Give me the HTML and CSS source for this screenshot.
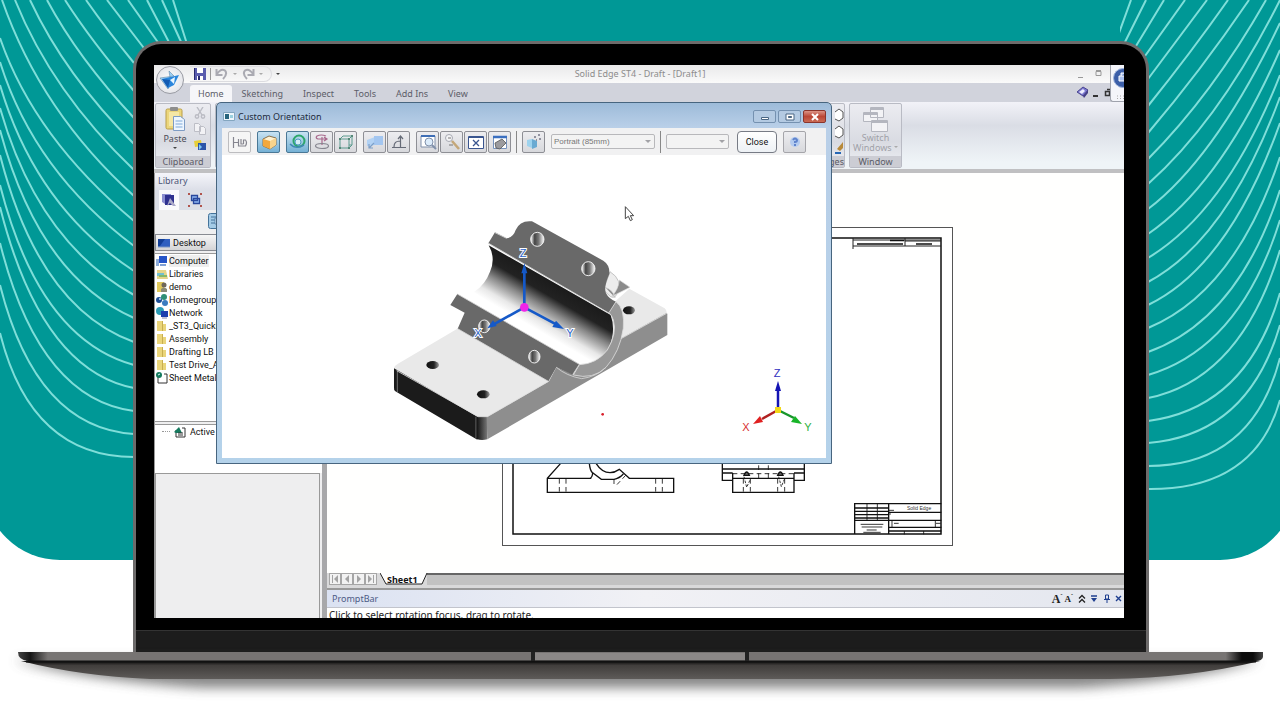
FILE: index.html
```html
<!DOCTYPE html>
<html lang="en">
<head>
<meta charset="utf-8">
<title>Solid Edge ST4 - Draft</title>
<link rel="stylesheet" href="styles.css">
</head>
<body>
<div class="backdrop">
  <svg class="waves waves-left" width="200" height="500" viewBox="0 0 200 500" aria-hidden="true">
    <path d="M173 0L187 44M162 0L182 44M147 0L172 48M128 0L162 48M107 0L150 56M86 0Q107 30 134 63M65 0Q92 42 134 91M47 0Q78 58 134 118M30 0Q65 75 134 144M15 0Q52 92 134 170M2 0Q41 112 134 196M0 38Q34 137 134 221M0 62Q34 171 134 246M0 85Q36 207 134 271M0 108Q38 242 134 295M0 130Q39 276 134 318M0 155Q39 308 134 342M0 185Q39 339 134 365M0 207Q41 370 134 388M0 243Q39 399 134 411M0 285Q36 428 134 434M0 333Q31 457 134 457"/>
  </svg>
  <svg class="waves waves-right" width="160" height="500" viewBox="1120 0 160 500" aria-hidden="true">
    <path d="M1131 0L1115 44M1146 0L1124 44M1164 0L1136 46M1185 0L1145 56M1207 0L1148 79M1228 0Q1190 54 1148 106M1249 0Q1200 72 1148 133M1266 0Q1212 95 1148 159M1280 0Q1220 120 1148 184M1280 23Q1216 157 1148 209M1280 50Q1221 184 1148 234M1280 75Q1227 210 1148 258M1280 97Q1227 240 1148 282M1280 123Q1229 266 1148 305M1280 157Q1235 292 1148 328M1280 190Q1238 320 1148 352M1280 220Q1240 348 1148 375M1280 250Q1241 379 1148 398M1280 293Q1247 408 1148 421M1280 325Q1248 435 1148 443M1280 358Q1252 466 1148 466M1280 400Q1255 490 1148 489"/>
  </svg>
</div>

<div class="laptop">
  <div class="lid">
    <div class="screen">
      <header class="titlebar">
        <div class="quick">
          <button class="plain" aria-label="Save"><svg width="12" height="12" viewBox="0 0 12 12"><path fill="#5a5cae" d="M0 0h12v12H0z"/><path fill="#fff" d="M3 0h6v5H3zM3 8h6v4H3z"/><path fill="#26286e" d="M4 8h2v4H4zM0 0h1v12H0z"/></svg></button>
          <span class="vline"></span>
          <button class="plain" aria-label="Undo"><svg width="14" height="12" viewBox="0 0 14 12"><path d="M1.500 1v6h6M2 6Q6 0 10 2.500Q13 6 8 11" fill="none" stroke="#aaaab2" stroke-width="2"/></svg></button>
          <i class="tri"></i>
          <button class="plain" aria-label="Redo"><svg width="14" height="12" viewBox="0 0 14 12"><path d="M12.500 1v6h-6M12 6Q8 0 4 2.500Q1 6 6 11" fill="none" stroke="#aaaab2" stroke-width="2"/></svg></button>
          <i class="tri"></i>
        </div>
        <i class="tri tri-dark"></i>
        <h1>Solid Edge ST4 - Draft - [Draft1]</h1>
        <svg class="wincontrols" width="24" height="10" viewBox="0 0 24 10" fill="none" stroke="#999"><path d="M0 8.500h5M18 2.500h5v4h-5zM18 1.500h5" stroke-width="1"/></svg>
      </header>

      <nav class="tabs">
        <a class="tab tab-on" href="#home">Home</a>
        <a class="tab" href="#sketching">Sketching</a>
        <a class="tab" href="#inspect">Inspect</a>
        <a class="tab" href="#tools">Tools</a>
        <a class="tab" href="#addins">Add Ins</a>
        <a class="tab" href="#view">View</a>
        <svg class="dochelp" width="36" height="14" viewBox="0 0 36 14"><path d="M1 7l6-5 5 3-5 6z" fill="#7b78d0" stroke="#4b4690"/><path d="M3 7l4-3 2 2-3 3z" fill="#eef"/><path d="M7 11l5-6v3l-4 5z" fill="#453f87"/><path d="M17 11h5" stroke="#333" stroke-width="2"/><path d="M29.500 6.500h4v4h-4zM31 4.500h5v4" fill="none" stroke="#333" stroke-width="1.500"/></svg>
      </nav>

      <button class="appbutton" aria-label="Application menu"><svg width="24" height="24" viewBox="0 0 24 24"><path d="M2 10l14-2-5-5 2 12-3 6z" fill="#9fd2f6" stroke="#6188a8" stroke-width=".6"/><path d="M4 11l17-4-5 10-6 3z" fill="#2b86dc"/><path d="M4 11l8 1-2 8z" fill="#125bb3"/><path d="M12 12l5-3-1 7z" fill="#e6f5ff"/></svg></button>

      <div class="ribbon">
        <section class="group clipboard">
          <div class="groupbody">
            <button class="big"><svg width="20" height="24" viewBox="0 0 20 24"><rect x="1" y="2" width="16" height="20" rx="1.500" fill="#ecd67c" stroke="#b99e49"/><rect x="5" y="0" width="8" height="4" rx="1" fill="#8d8d8d"/><path d="M4 5h10v14H4z" fill="#f5e7a6"/><path d="M8.500 9.500h7l4 3v11h-11z" fill="#eef6ff" stroke="#7e9cc4"/><path d="M10.500 14h7M10.500 17h7M10.500 20h7" stroke="#7fa9d8"/></svg><span>Paste</span><i class="tri tri-dark"></i></button>
            <div class="stack">
              <svg width="12" height="12" viewBox="0 0 12 12" fill="none" stroke="#bbbcc4" stroke-width="1.400"><path d="M3 0l5 8M9 0L4 8"/><circle cx="3" cy="9.500" r="1.700"/><circle cx="9" cy="9.500" r="1.700"/></svg>
              <svg width="12" height="12" viewBox="0 0 12 12" fill="#f2f2f5" stroke="#bdbec6"><path d="M.5.5h4l2 2v6h-6zM5.500 3.500h4l2 2v6h-6z"/></svg>
              <svg width="12" height="12" viewBox="0 0 12 12"><path d="M0 2l7-1 1 6-7 1z" fill="#e6cf3a"/><path d="M4 4h8v7H4z" fill="#2c55a8"/><path d="M5 5l3 3-3 3z" fill="#7cc7f4"/></svg>
            </div>
          </div>
          <h2>Clipboard</h2>
        </section>
        <section class="group images">
          <div class="groupbody"><svg width="9" height="48" viewBox="0 0 9 48"><path d="M0 5l4-3 4 3v6l-4 3-4-2M0 22l4-3 4 3v6l-4 3-4-2" fill="#fff" stroke="#555"/><path d="M2 42l6-7v6l-3 3z" fill="#b88a3a"/><path d="M0 46h6" stroke="#2667b5" stroke-width="2"/></svg></div>
          <h2>Images</h2>
        </section>
        <section class="group window">
          <div class="groupbody">
            <button class="big dim"><svg width="26" height="25" viewBox="0 0 26 25" fill="#f3f3f6" stroke="#b4b6bf"><path d="M7.500.5h13v10h-13zM.5 5.500h14v9H.5zM8.500 13.500h16v11h-16z"/><path d="M8 2h12M1 7h13M9 15h15" stroke-width="2"/></svg><span>Switch<br>Windows <i class="tri"></i></span></button>
          </div>
          <h2>Window</h2>
        </section>
      </div>

      <div class="gadget"><svg width="14" height="36" viewBox="0 0 14 36"><circle cx="12" cy="13" r="9.500" fill="#3b5ea8" stroke="#9fb4dc"/><path d="M8 11h7v5H8zM10 11V8h5" fill="#a9c0ee" stroke="#fff"/><path d="M6 31h8M6 33.500h8" stroke="#aaa" stroke-dasharray="1 2"/></svg></div>

      <div class="work">
        <aside class="library">
          <h2 class="panehead">Library</h2>
          <div class="panetabs">
            <button class="panetab on" aria-label="Library"><svg width="16" height="14" viewBox="0 0 16 14"><path d="M1 1h9v11l-6-1-3-2z" fill="#8b8ed0"/><path d="M4 2h9v10H4z" fill="#2f318f"/><path d="M9 5l6 8h-3l-3-3-3 3z" fill="#aaa9c8"/></svg></button>
            <button class="panetab" aria-label="Blocks"><svg width="14" height="14" viewBox="0 0 14 14"><path d="M3.500 2.500h6v5h-6zM5.500 5.500h6v5h-6z" fill="#8fb7f2" stroke="#28479c" stroke-width="1.300"/><path d="M0 0h2v2H0zM12 0h2v2h-2zM0 12h2v2H0zM12 12h2v2h-2z" fill="#b0544c"/></svg></button>
          </div>
          <div class="panetools"><svg width="20" height="16" viewBox="0 0 20 16"><rect x=".5" y=".5" width="19" height="15" rx="2" fill="#a4cbe6" stroke="#44739a"/><path d="M3 4h5M3 7h9M3 10h5" stroke="#44739a"/><path d="M7 5h6v6H7z" fill="#e9f5ff" stroke="#5c88b0"/></svg></div>
          <button class="place"><svg width="12" height="10" viewBox="0 0 12 10"><path d="M0 1h12v8H0z" fill="#2f5fc0"/><path d="M0 1h7L2 8H0z" fill="#123e96"/><path d="M0 9h12" stroke="#7895c5"/></svg>Desktop</button>
          <ul class="files">
            <li><svg class="ico" viewBox="0 0 12 12"><path d="M3 1h8v7H3z" fill="#2554c8"/><path d="M0 4h3v7H0z" fill="#8dabd8"/><path d="M4 10h6" stroke="#7fa0d5" stroke-width="2"/></svg><span class="current">Computer</span></li>
            <li><svg class="ico" viewBox="0 0 12 12"><path d="M1 2h9l2 9H1z" fill="#e6d487"/><path d="M1 5h7v3H1z" fill="#73bfcf"/><path d="M3 7h8v2H3z" fill="#84b86a"/></svg>Libraries</li>
            <li><svg class="ico" viewBox="0 0 12 12"><path d="M1 1h7v10H1z" fill="#dfc85c"/><circle cx="8" cy="4" r="2.500" fill="#6e675b"/><path d="M5 11V8q3-3 6 0v3z" fill="#8c8b76"/></svg>demo</li>
            <li><svg class="ico" viewBox="0 0 12 12"><circle cx="3" cy="6" r="3" fill="#1c4e96"/><circle cx="8" cy="3" r="3" fill="#2f8f74"/><circle cx="9" cy="9" r="3" fill="#3b7cc0"/><circle cx="4" cy="5" r="1" fill="#bfe2ff"/></svg>Homegroup</li>
            <li><svg class="ico" viewBox="0 0 12 12"><circle cx="4" cy="4" r="4" fill="#2a9bb5"/><path d="M5 4h7v6H5z" fill="#1d3fae"/><path d="M6 11h5" stroke="#88a"/></svg>Network</li>
            <li><svg class="ico" viewBox="0 0 12 12"><path d="M1 1h5v3h4v7H1z" fill="#ead57a"/><path d="M6 1h1v10H6z" fill="#c8ae50"/></svg>_ST3_QuickLearn</li>
            <li><svg class="ico" viewBox="0 0 12 12"><path d="M1 1h5v3h4v7H1z" fill="#ead57a"/><path d="M6 1h1v10H6z" fill="#c8ae50"/></svg>Assembly</li>
            <li><svg class="ico" viewBox="0 0 12 12"><path d="M1 1h5v3h4v7H1z" fill="#ead57a"/><path d="M6 1h1v10H6z" fill="#c8ae50"/></svg>Drafting LB</li>
            <li><svg class="ico" viewBox="0 0 12 12"><path d="M1 1h5v3h4v7H1z" fill="#ead57a"/><path d="M6 1h1v10H6z" fill="#c8ae50"/></svg>Test Drive_Assy</li>
            <li><svg class="ico" viewBox="0 0 12 12"><path d="M2 5v6h9V2H8" fill="#fff" stroke="#333"/><circle cx="3" cy="3" r="3" fill="#157a5e"/><path d="M2 3l2-1" stroke="#dff"/></svg>Sheet Metal1</li>
          </ul>
          <div class="active"><span class="leader"></span><svg class="ico" viewBox="0 0 12 12"><path d="M2 4v7h9V2H8" fill="#fff" stroke="#333"/><path d="M0 6l5-5 3 6H2z" fill="#157a5e"/><path d="M4 7h5M4 9h5" stroke="#333"/></svg>Active</div>
          <div class="preview"></div>
        </aside>

        <main class="main">
          <div class="canvas">
            <svg width="797" height="400" viewBox="327 173 797 400" role="img" aria-label="Draft sheet">
              <rect x="502.500" y="227.500" width="450" height="318" fill="#fff" stroke="#555"/>
              <path d="M513 238H941V534H513z" fill="none" stroke="#111" stroke-width="1.500"/>
              <path d="M853 238V249M853 240H941M853 246H941M905 238V246M905 241h36" stroke="#222" fill="none"/><path d="M890 240.500h14M857 244h46M916 244h16" stroke="#111" stroke-width="1.500"/>
              <g transform="translate(480 440) scale(.33333)" fill="none" stroke="#111" stroke-width="4">
                <path d="M202 115H334M446 115H581V157H202V115L242 70M328 70Q330 92 338 99Q337 112 330 115M338 98L364 118H402Q418 115 430 102M348 70Q366 98 390 98Q404 98 418 88L448 115"/>
                <path d="M238 117v40M258 117v40M527 117v40M547 117v40M437 106l-30 32M402 118v14" stroke-width="2.500" stroke-dasharray="14 10"/>
                <path d="M727 70V121H758M973 70V121H942M727 87H973M727 99H758M942 99H973M758 99V157H942V99M758 115H942"/>
                <path d="M758 101H942M836 76v40M865 76v40M790 117v40M811 117v40M893 117v40M914 117v40" stroke-width="2.500" stroke-dasharray="14 10"/>
                <path d="M792 106q8-20 16 0zM893 106q8-20 16 0z" fill="#666"/><path d="M792 110l8 32 10-22M896 110l8 30 9-22" stroke-width="2.500" stroke-dasharray="8 4"/>
                <path d="M1124 282V191H1384M1226 191V282M1124 204H1226M1124 214H1226M1124 224H1226M1124 234H1226M1124 241H1384M1226 217H1384M1226 262H1384M1226 273H1384"/>
                <path d="M1161 191v50M1192 191v50M1236 241v20M1366 241v20M1273 273v10M1331 273v10M1242 250h14M1368 250h14M1230 217v8M1226 211h16M1142 253h68M1145 261h62M1160 270h30M1150 277h52" stroke-width="2.500"/>
              </g>
              <text class="sheetlabel" x="907" y="510">Solid Edge</text>
            </svg>
          </div>
          <div class="sheets">
            <button class="nav" aria-label="First"><svg width="8" height="8" viewBox="0 0 8 8"><path d="M1 0h1v8H1zM7 0v8L3 4z"/></svg></button>
            <button class="nav" aria-label="Previous"><svg width="8" height="8" viewBox="0 0 8 8"><path d="M6 0v8L2 4z"/></svg></button>
            <button class="nav" aria-label="Next"><svg width="8" height="8" viewBox="0 0 8 8"><path d="M2 0v8l4-4z"/></svg></button>
            <button class="nav" aria-label="Last"><svg width="8" height="8" viewBox="0 0 8 8"><path d="M6 0h1v8H6zM1 0v8l4-4z"/></svg></button>
            <div class="sheettab">
              <svg width="48" height="12" viewBox="0 0 48 12" aria-hidden="true"><path d="M0 0L6 11H42L47 0" fill="#fff" stroke="#222"/></svg>
              <button>Sheet1</button>
            </div>
            <div class="sheetrail"></div>
          </div>
          <div class="prompthead">
            <h2>PromptBar</h2>
            <span class="fontbig">A<sup>ˆ</sup></span><span class="fontsmall">A<sup>ˇ</sup></span>
            <svg width="46" height="10" viewBox="0 0 46 10" fill="none" stroke="#1f3f8f"><path d="M1 4.500l3-3 3 3M1 8.500l3-3 3 3" stroke="#222" stroke-width="1.300"/><path d="M13 2h6" stroke-width="1.500"/><path d="M13 4h6l-3 4z" fill="#1f3f8f" stroke="none"/><path d="M27.500 1h3v4h-3zM26 5.500h6M29 6v3"/><path d="M38 2l5 5M43 2l-5 5" stroke-width="1.400"/></svg>
          </div>
          <p class="prompt">Click to select rotation focus, drag to rotate.</p>
        </main>
      </div>

      <section class="dialog" role="dialog" aria-label="Custom Orientation">
        <header class="dlghead">
          <svg width="12" height="9" viewBox="0 0 12 9"><path d="M.5.5h11v8H.5z" fill="#eef6fc" stroke="#84a6c0"/><path d="M2 2h4v5H2z" fill="#27647d"/><path d="M7 3h3v3H7z" fill="#9ad0df"/></svg>
          <h2>Custom Orientation</h2>
          <button class="cap" aria-label="Minimize"><svg width="10" height="8" viewBox="0 0 10 8"><path d="M1.500 4.500h7v2h-7z" fill="#fff" stroke="#4a6684"/></svg></button>
          <button class="cap" aria-label="Maximize"><svg width="10" height="8" viewBox="0 0 10 8"><path d="M1 1h8v6H1z" fill="#fff" stroke="#4a6684"/><path d="M3.500 3.500h3v1h-3z" stroke="#4a6684"/></svg></button>
          <button class="cap cap-close" aria-label="Close window"><svg width="10" height="8" viewBox="0 0 10 8"><path d="M2 1l6 6M8 1L2 7" stroke="#fff" stroke-width="2"/></svg></button>
        </header>
        <div class="toolbar">
          <div class="tools"><button class="tool pale" aria-label="Named views"><svg viewBox="0 0 18 18" fill="none" stroke="#85858f" stroke-width="1.200"><path d="M2.500 4v11M3 9.500h4M7.500 6v7h7q2-3.500 0-6h-2v4M10 6v5h2.500"/></svg></button></div>
          <div class="tools"><button class="tool on" aria-label="Common views"><svg viewBox="0 0 18 18"><path d="M3 6l6-3 7 2v7l-6 4-7-3z" fill="#fff1cf" stroke="#8a704a"/><path d="M3 6l7 2v8l-7-3z" fill="#f2a83e"/><path d="M10 8l6-3v7l-6 4z" fill="#f8d38b"/></svg></button></div>
          <div class="tools">
            <button class="tool on" aria-label="Rotate"><svg viewBox="0 0 18 18" fill="none"><circle cx="10" cy="8" r="5.500" stroke="#2ca66b" stroke-width="2"/><circle cx="9" cy="9" r="3" fill="#d5edf5" stroke="#4b9ac2"/><path d="M1 11q6 6 14 1" stroke="#3f88b4" stroke-width="1.500"/></svg></button>
            <button class="tool" aria-label="Spin about"><svg viewBox="0 0 18 18" fill="none" stroke="#a8688c" stroke-width="1.200"><path d="M13 3q-5-2-9 0-2 2 1 3h8M11 4l3 2-3 2M9 4v8"/><ellipse cx="9" cy="13" rx="6.500" ry="2.500" stroke="#85858f"/></svg></button>
            <button class="tool" aria-label="Fit box"><svg viewBox="0 0 18 18" fill="none" stroke="#5a9a8e"><path d="M3 6h9v9H3zM6 3h9v9h-3M3 6l3-3M12 6l3-3M12 15l3-3"/><path d="M2 5h2v2H2zM11 5h2v2h-2zM2 14h2v2H2zM11 14h2v2h-2zM14 2h2v2h-2z" fill="#587" stroke="none"/></svg></button>
          </div>
          <div class="tools">
            <button class="tool" aria-label="Look at face"><svg viewBox="0 0 18 18"><path d="M1 7l8-3v8l-8 1z" fill="#b2d2f4"/><path d="M8 3h9v9H8z" fill="#a3c6f0"/><path d="M3 15l5-5M3 11v4h4" stroke="#7d9fc8" fill="none" stroke-width="1.200"/></svg></button>
            <button class="tool" aria-label="Align edge"><svg viewBox="0 0 18 18" fill="none" stroke="#666b77" stroke-width="1.200"><path d="M2 14.500h14M10.500 4v10M8 6l2.500-3L13 6M4 14q0-6 6-6"/></svg></button>
          </div>
          <div class="tools">
            <button class="tool" aria-label="Zoom area"><svg viewBox="0 0 18 18" fill="#fff" stroke="#8090aa"><path d="M2 3h14v11H2z"/><path d="M2 3h14" stroke="#3f6eb5" stroke-width="2"/><circle cx="10" cy="9" r="4" fill="#dcecfb"/><path d="M13 12l4 4" stroke-width="2"/></svg></button>
            <button class="tool" aria-label="Zoom"><svg viewBox="0 0 18 18" fill="none"><circle cx="6" cy="5" r="3.500" stroke="#a6a9b2" fill="#f4f4f6"/><path d="M5 5h3M6 12h4" stroke="#777"/><path d="M9 8l7 8" stroke="#c4a779" stroke-width="2.500"/></svg></button>
            <button class="tool" aria-label="Fit"><svg viewBox="0 0 18 18" fill="#fff" stroke="#39558f"><path d="M1.500 3.500h15v12h-15z"/><path d="M2 4h14" stroke-width="2"/><path d="M6 7l6 6M12 7l-6 6" stroke-width="1.300"/></svg></button>
            <button class="tool" aria-label="Pan"><svg viewBox="0 0 18 18"><path d="M2.500 3.500h13v12h-13z" fill="#fff" stroke="#7692bd"/><path d="M2 4h14" stroke="#3b6fc0" stroke-width="2.500"/><path d="M4 10l7-4 4 4-6 6-4-1z" fill="#9b9b9f" stroke="#555" stroke-width=".8"/></svg></button>
          </div>
          <span class="rule"></span>
          <div class="tools"><button class="tool" aria-label="Perspective"><svg viewBox="0 0 18 18"><path d="M2 7l5-1v9l-5-2z" fill="#9ed3ee"/><path d="M7 6l5 2v6l-5 2z" fill="#6aaad2"/><path d="M9 4h2M13 2h2M14 6h2M11 7h1" stroke="#778" stroke-width="1.500"/></svg></button></div>
          <label class="combo combo-lens"><select aria-label="Lens"><option>Portrait (85mm)</option></select></label>
          <span class="rule"></span>
          <label class="combo combo-angle"><select aria-label="Angle"><option></option></select></label>
          <button class="closebtn">Close</button>
          <button class="tool help" aria-label="Help"><svg viewBox="0 0 18 18"><circle cx="9" cy="9" r="5" fill="#b4cbef"/><path d="M7 7q2-3 4 0q0 2-2 2v1" fill="none" stroke="#5f83cc" stroke-width="2"/><path d="M8 12h2" stroke="#5f83cc" stroke-width="2"/></svg></button>
        </div>
        <div class="viewport">
          <svg width="604" height="303" viewBox="222 155 604 303" role="img" aria-label="Bearing bracket">
            <defs>
              <linearGradient id="bore" gradientUnits="userSpaceOnUse" x1="555" y1="215" x2="450" y2="396">
                <stop offset="0" stop-color="#161616"/><stop offset=".34" stop-color="#222"/><stop offset=".52" stop-color="#888"/><stop offset=".72" stop-color="#e8e8e8"/><stop offset=".85" stop-color="#fff"/>
              </linearGradient>
              <linearGradient id="hole" x1="0" x2="1"><stop offset="0" stop-color="#fff"/><stop offset=".3" stop-color="#444"/><stop offset=".6" stop-color="#777"/><stop offset="1" stop-color="#fff"/></linearGradient>
              <linearGradient id="drill" x1="0" x2="1"><stop offset="0" stop-color="#111"/><stop offset=".6" stop-color="#222"/><stop offset="1" stop-color="#999"/></linearGradient>
              <linearGradient id="corner" x1="0" x2="1"><stop offset="0" stop-color="#111"/><stop offset="1" stop-color="#777"/></linearGradient>
            </defs>
            <g transform="translate(370 200) scale(.33333)">
              <path d="M72 505Q72 498 84 491L262 386L540 545L740 300L778 266L884 325Q892 332 890 342L640 520L352 652H322L80 516z" fill="#e9e9e9"/>
              <path d="M72 505L322 650V719L76 574Q71 570 72 562z" fill="#1b1b1b"/>
              <path d="M82 510V577M318 650V716" stroke="#999" stroke-width="2"/>
              <path d="M320 650H352V718Q334 722 320 717z" fill="url(#corner)"/>
              <path d="M350 652L535 545L559 502L605 521Q680 545 735 425L888 340Q893 338 892 345V405L352 718z" fill="#8e8e8e"/>
              <path d="M80 512L325 650H352L536 544L557 503M735 426L890 340" fill="none" stroke="#e0e0e0" stroke-width="2.500"/>
              <path d="M720 215Q760 240 742 280Q735 297 722 290L700 270z" fill="#ededed" stroke="#aaa" stroke-width="2"/>
              <path d="M748 240L780 262L724 290Q745 270 748 240zM706 262Q730 270 736 294" fill="#8b8b8b" stroke="#ddd" stroke-width="2"/>
              <path d="M356 136Q378 175 360 215Q345 255 312 276L630 494Q690 490 718 440Q738 390 722 345z" fill="url(#bore)"/>
              <path d="M355 130L375 97L410 115Q430 112 437 90Q450 60 486 64L700 182Q720 195 718 222Q700 262 708 280Q716 296 738 305L718 340z" fill="#696969"/>
              <path d="M356 130L718 340M375 98L410 115" stroke="#d8d8d8" stroke-width="2.500" fill="none"/>
              <path d="M738 305Q765 325 760 385Q750 455 708 502Q670 540 610 525L628 494Q680 492 712 450Q742 400 730 360Q725 345 717 338z" fill="#989898" stroke="#ddd" stroke-width="2.500"/>
              <path d="M241 315L262 282L628 493L608 524L559 502L535 544L263 386L284 338z" fill="#696969"/>
              <path d="M262 282L628 493L608 524M559 502Q590 528 635 536Q680 530 708 502M263 386L535 544" fill="none" stroke="#d5d5d5" stroke-width="2.500"/>
              <g fill="url(#hole)" stroke="#eee" stroke-width="3"><ellipse cx="502" cy="118" rx="20" ry="21"/><ellipse cx="655" cy="206" rx="20" ry="21"/><ellipse cx="343" cy="379" rx="17" ry="19"/><ellipse cx="493" cy="470" rx="17" ry="19"/></g>
              <g fill="url(#drill)"><ellipse cx="188" cy="495" rx="19" ry="12"/><ellipse cx="340" cy="583" rx="19" ry="12"/><ellipse cx="777" cy="331" rx="18" ry="12"/></g>
              <path d="M463 322V215M463 322L370 374M463 322L560 374" stroke="#1559c8" stroke-width="8"/>
              <path d="M463 190l9 30h-18zM352 385l17-24 11 17zM582 387l-35-6 11-19z" fill="#1559c8"/>
              <circle cx="463" cy="322" r="13" fill="#f024e8"/>
              <circle cx="698" cy="643" r="4" fill="#d8202c"/>
              <path d="M766 20v36l9-7 6 13 6-3-6-12h10z" fill="#fff" stroke="#444" stroke-width="3"/>
            </g>
            <g class="axis halo"><text x="523" y="257">Z</text><text x="478" y="337">X</text><text x="570" y="337">Y</text></g>
            <g stroke-width="2.500"><path d="M778 409V390" stroke="#1414b4"/><path d="M778 381l3 10h-6z" fill="#1414b4"/><path d="M778 410l-16 9" stroke="#b02020"/><path d="M753 424l7-8 3 6z" fill="#e02020"/><path d="M778 410l16 8" stroke="#18962a"/><path d="M802 424l-11-2 4-6z" fill="#18b428"/></g>
            <path d="M775 407h6v6h-6z" fill="#f2d818"/>
            <g class="axis"><text x="777" y="377" fill="#3030c0">Z</text><text x="746" y="431" fill="#d83030">X</text><text x="808" y="431" fill="#30b040">Y</text></g>
          </svg>
        </div>
      </section>
    </div>
    <div class="chin"></div>
  </div>
  <svg class="base" viewBox="0 0 1280 68" preserveAspectRatio="none" aria-hidden="true">
    <defs>
      <linearGradient id="deck" x1="0" x2="1"><stop offset="0" stop-color="#444"/><stop offset=".01" stop-color="#161616"/><stop offset=".024" stop-color="#777473"/><stop offset=".97" stop-color="#777473"/><stop offset=".983" stop-color="#0a0a0a"/><stop offset=".992" stop-color="#0a0a0a"/><stop offset="1" stop-color="#444"/></linearGradient>
      <linearGradient id="belly" x1="0" x2="0" y1="0" y2="1"><stop offset="0" stop-color="#0b0b0b"/><stop offset=".25" stop-color="#413e3c"/><stop offset="1" stop-color="#5e5b59"/></linearGradient>
      <filter id="soft" x="-5%" y="-50%" width="110%" height="220%"><feGaussianBlur stdDeviation="6"/></filter>
    </defs>
    <path d="M14 8H1260Q1200 28 1080 36H200Q80 28 14 8z" fill="#555" opacity=".7" filter="url(#soft)"/>
    <path d="M21 9H1260Q1190 26 1110 27H150Q80 24 21 9z" fill="url(#belly)"/>
    <path d="M18 0H1263V5Q1262 9 1256 9H28Q18 8 18 0z" fill="url(#deck)"/>
    <path d="M26 9.500H1256" stroke="#111" stroke-width="2"/>
    <path d="M533 1H747V8H533z" fill="#8b8887"/><path d="M533 0v9M747 0v9" stroke="#222" stroke-width="4"/>
  </svg>
</div>
</body>
</html>
```
FILE: styles.css
```css
* { box-sizing: border-box; }
html, body { margin: 0; height: 100%; }
body { position: relative; overflow: hidden; background: #fff; color: #222; font-family: "Noto Sans", "Open Sans", sans-serif; font-size: 9px; line-height: 12px; }
button, select { font: inherit; color: inherit; margin: 0; padding: 0; border: 0; background: none; }
h1, h2, p, ul { margin: 0; padding: 0; font-size: 9px; font-weight: 400; list-style: none; }
svg { display: block; flex: none; }

/* Backdrop */
.backdrop { position: absolute; top: 0; left: -16px; right: -16px; height: 560px; background: #009896; border-radius: 0 0 76px 76px; overflow: hidden; }
.waves { position: absolute; top: 0; fill: none; stroke: #7fded9; stroke-width: 2; }
.waves-left { left: 16px; }
.waves-right { right: 16px; }

/* Laptop */
.laptop { position: relative; display: flex; flex-direction: column; height: 100%; padding-top: 41px; }
.lid { flex: 1; min-height: 0; display: flex; flex-direction: column; margin: 0 131px 0 133px; padding-top: 21px; background: #000; border: 3px solid #6d6b6b; border-bottom: 0; border-radius: 28px 28px 0 0; }
.chin { height: 22px; margin-top: 12px; background: #1c1c1c; border-top: 1px solid #333; }
.base { width: 100%; height: 68px; overflow: visible; }

/* Application window */
.screen { position: relative; flex: 1; min-height: 0; display: flex; flex-direction: column; margin: 0 22px 0 18px; overflow: hidden; background: #d0d2d9; }
.titlebar { flex: none; display: flex; align-items: center; height: 18px; padding: 0 22px 0 36px; background: linear-gradient(#e9e9ea, #fafafa); }
.quick { display: flex; align-items: center; gap: 4px; height: 16px; padding: 0 8px 0 4px; border: 1px solid #dcdce0; border-left: 0; border-radius: 0 8px 8px 0; }
.titlebar > .tri { margin-left: 4px; }
.titlebar h1 { flex: 1; margin-right: 78px; text-align: center; color: #8c8c8c; }
.vline { width: 1px; height: 12px; background: #999; }
.tri { display: inline-block; border: 2px solid transparent; border-top-color: #aaa; border-bottom: 0; }
.tri-dark { border-top-color: #444; }
.tabs { flex: none; display: flex; align-items: flex-end; height: 19px; padding: 0 12px 0 36px; background: #d1d3dc; }
.tab { height: 17px; padding: 3px 10px 0; color: #5c5d68; text-decoration: none; }
.tab-on { padding: 3px 8px 0; background: #f6f6f9; border-radius: 3px 3px 0 0; }
.dochelp { margin: 0 0 3px auto; }
.appbutton { position: absolute; top: 1px; left: 2px; display: grid; place-items: center; width: 28px; height: 28px; border: 1px solid #999ba3; border-radius: 50%; background: radial-gradient(#fff, #dcdde3); }
.ribbon { flex: none; display: flex; align-items: flex-start; gap: 4px; height: 71px; padding: 1px; background: linear-gradient(#f2f2f8, #dadde5 35%, #eff4f7 90%); border-bottom: 4px solid #c0c0c2; }
.group { display: flex; flex-direction: column; height: 65px; border: 1px solid #b9bbc4; border-radius: 2px; background: linear-gradient(#ececf1, #d9dbe2 60%, #eef0f4); }
.groupbody { flex: 1; min-height: 0; display: flex; padding-top: 3px; }
.group h2 { height: 11px; line-height: 11px; text-align: center; color: #5a5b66; background: #cccdd4; }
.clipboard { width: 56px; }
.images { width: 630px; }
.images .groupbody { justify-content: flex-end; }
.images h2 { text-align: right; }
.window { width: 53px; }
.big { display: flex; flex-direction: column; align-items: center; line-height: 10px; color: #4c4d58; }
.big span { margin-top: 3px; }
.clipboard .big { width: 38px; }
.big > .tri { margin-top: 3px; }
.window .big { width: 100%; }
.window .big span { margin-top: 1px; }
.dim { color: #a0a1a8; }
.dim .tri { vertical-align: 3px; }
.stack { display: flex; flex-direction: column; gap: 4px; }
.gadget { position: absolute; top: 0; right: 0; width: 14px; height: 37px; border: 1px solid #9fa2ac; border-width: 0 0 1px 1px; border-radius: 0 0 0 3px; background: #f4f5fa; }

.work { flex: 1; min-height: 0; display: flex; background: #a8a8aa; }
.library { width: 168px; flex: none; display: flex; flex-direction: column; border-left: 1px solid #999; background: #efeff0; }
.panehead { height: 17px; padding: 2px 3px; color: #4c5577; background: linear-gradient(#f5f5fa, #dcdfe8); }
.panetabs { display: flex; gap: 6px; height: 20px; padding: 0 4px; background: #dcdfe7; }
.panetab { display: grid; place-items: center; width: 20px; height: 20px; }
.panetab.on { background: #fafafc; }
.panetools { height: 24px; padding: 3px 0 0 53px; }
.place, .files, .active { font-family: Roboto, "Open Sans", sans-serif; color: #111; }
.place { display: flex; align-items: center; gap: 3px; height: 17px; padding-left: 2px; border: 1px solid #888b92; background: linear-gradient(#f6f6f6, #d4d4d6); }
.files { flex: none; height: 169px; margin-top: 2px; border: 1px solid #999; border-width: 1px 0; background: #fff; }
.files li { display: flex; align-items: center; gap: 1px; height: 13px; padding-left: 1px; white-space: nowrap; }
.current { background: #eee; }
.ico { width: 12px; height: 12px; }
.active { flex: none; display: flex; gap: 4px; height: 49px; margin-top: 2px; padding: 1px 0 0 7px; border-top: 1px solid #999; background: #fff; }
.leader { width: 8px; height: 6px; border-bottom: 1px dotted #999; }
.preview { flex: 1; margin-right: 2px; border: 1px solid #999; border-width: 1px 1px 0; background: #eeeeef; }
.main { flex: 1; min-width: 0; display: flex; flex-direction: column; margin-left: 5px; background: #fff; }
.canvas { flex: 1; min-height: 0; background: #fffffe; overflow: hidden; }
.sheetlabel { font: 5px "Liberation Sans", sans-serif; fill: #333; }
.sheets { flex: none; display: flex; align-items: stretch; height: 17px; padding: 0 0 3px 2px; background: #d9d9da; border-bottom: 2px solid #999; }
.nav { display: grid; place-items: center; width: 12px; border: 1px solid #a6a6a6; background: #f2f2f2; }
.nav svg { fill: #a3a3a3; }
.sheettab { position: relative; width: 50px; padding-left: 3px; }
.sheettab button { position: absolute; top: 1px; left: 10px; font-weight: 700; line-height: 11px; color: #111; }
.sheetrail { flex: 1; border-top: 2px solid #666; background: #c2c2c2; }
.prompthead { flex: none; display: flex; align-items: center; height: 18px; padding: 0 0 0 5px; background: linear-gradient(90deg, #dbe2f2, #f1f1f5 40%, #e4e7ef); border-bottom: 1px solid #c2c4cc; }
.prompthead h2 { flex: 1; color: #4c5a85; }
.fontbig, .fontsmall { font-family: "Liberation Serif", serif; font-weight: 700; font-size: 12px; color: #222; margin-right: 2px; }
.fontsmall { font-size: 9px; margin-right: 5px; }
.fontbig sup, .fontsmall sup { font-size: 6px; line-height: 6px; }
.prompt { flex: none; height: 10px; padding: 1px 2px 0; font-size: 10px; white-space: nowrap; overflow: hidden; color: #222; }

/* Orientation dialog */
.dialog { position: absolute; top: 37px; left: 62px; width: 616px; display: flex; flex-direction: column; padding: 0 5px 5px; border: 1px solid #47657f; border-radius: 5px 5px 0 0; background: linear-gradient(#9dbbd9, #b9cfe8 24px, #b4d2ea); }
.dlghead { display: flex; align-items: center; gap: 2px; height: 25px; padding: 2px 0 0 1px; }
.dlghead h2 { flex: 1; margin-left: 1px; color: #1d2b3d; }
.cap { display: grid; place-items: center; width: 23px; height: 13px; border: 1px solid #7591b0; border-radius: 2px; background: #b4cae2; }
.cap-close { border-color: #8b352c; background: linear-gradient(#dc9486, #bb4736 50%, #c96a54); }
.toolbar { display: flex; align-items: center; gap: 6px; height: 27px; padding: 0 6px; background: #f1f1f2; }
.tools { display: flex; gap: 1px; }
.tool { display: grid; place-items: center; width: 23px; height: 22px; border: 1px solid #8e8f95; border-radius: 2px; background: linear-gradient(#ededf0, #d7d8dc); }
.tool svg { width: 18px; height: 18px; }
.tool.pale { border-color: #bdbdc0; background: #f5f5f5; }
.tool.on { border-color: #4a7896; background: linear-gradient(#c7e2f2, #75b1d5); }
.rule { width: 1px; height: 22px; margin: 0 -1px; background: #888; }
.combo { position: relative; display: flex; height: 15px; }
.combo select { width: 100%; padding: 0 2px; appearance: none; border: 1px solid #b8b8bb; border-radius: 2px; background: #f3f3f3; color: #777; font-family: "Liberation Sans", sans-serif; font-size: 8px; }
.combo::after { content: ""; position: absolute; top: 6px; right: 4px; border: 3px solid transparent; border-top-color: #a2a2a6; border-bottom: 0; }
.combo-lens { width: 104px; }
.combo-angle { width: 63px; }
.closebtn { width: 40px; height: 22px; margin-left: 2px; border: 1px solid #777b85; border-radius: 4px; background: linear-gradient(#fff, #edf1f5); color: #111; font-family: Roboto, sans-serif; }
.help { border-color: #a5a5aa; }
.viewport { height: 303px; background: #fff; overflow: hidden; }
.axis { font: 11px "Liberation Sans", sans-serif; text-anchor: middle; }
.halo { fill: #2a62c8; stroke: #fff; stroke-width: 2px; paint-order: stroke; }
```
